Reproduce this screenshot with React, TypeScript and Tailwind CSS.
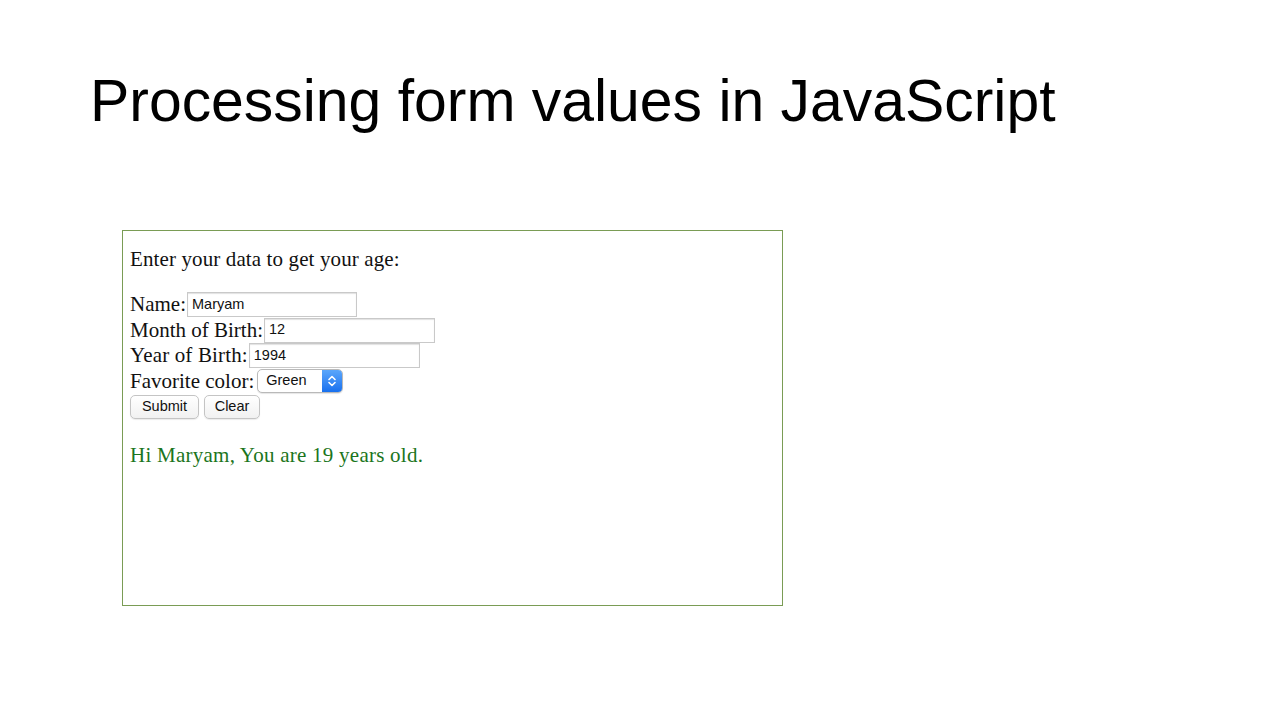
import React from "react";

const serif = { fontFamily: '"Liberation Serif", "Times New Roman", serif' };
const sans = { fontFamily: '"Liberation Sans", Arial, sans-serif' };

function Field({ label, value, width }: { label: string; value: string; width: string }) {
  return (
    <div className="flex items-center h-[25.5px]">
      <span className="leading-none">{label}</span>
      <div
        className={`${width} h-[25px] ml-px border border-[#c9c9c9] shadow-[inset_0_1px_1px_rgba(0,0,0,0.12)] bg-white flex items-center pl-[4px] text-[14.5px] text-[#111]`}
        style={sans}
      >
        {value}
      </div>
    </div>
  );
}

export default function App() {
  return (
    <div className="w-[1280px] h-[720px] bg-white overflow-hidden pl-[90px] pt-[71px]">
      <h1 className="text-[58.9px] leading-[60px] text-black" style={sans}>
        Processing form values in JavaScript
      </h1>
      <div
        className="mt-[99px] ml-[32px] w-[661px] h-[376px] border border-[#7a9c55] pl-[7px] pt-[17px] text-[21px] text-[#111]"
        style={serif}
      >
        <p className="leading-[23px] tracking-[0.12px]">Enter your data to get your age:</p>
        <div className="mt-[21px] flex flex-col">
          <Field label="Name:" value="Maryam" width="w-[170px]" />
          <Field label="Month of Birth:" value="12" width="w-[171px]" />
          <div className="flex items-center h-[25.5px]">
            <span className="leading-none tracking-[0.15px]">Year of Birth:</span>
            <div
              className="w-[171px] h-[25px] ml-px border border-[#c9c9c9] shadow-[inset_0_1px_1px_rgba(0,0,0,0.12)] bg-white flex items-center pl-[4px] text-[14.5px] text-[#111]"
              style={sans}
            >
              1994
            </div>
          </div>
          <div className="flex items-center h-[25.5px]">
            <span className="leading-none">Favorite color:</span>
            <div
              className="ml-[3px] w-[86px] h-[24px] rounded-[5px] border border-[#b9b9b9] bg-white flex items-stretch overflow-hidden shadow-[0_1px_1px_rgba(0,0,0,0.1)]"
              style={sans}
            >
              <span className="flex-1 flex items-center pl-[8px] text-[14.5px] text-[#111]">Green</span>
              <span className="w-[20px] flex items-center justify-center bg-gradient-to-b from-[#5aa6fb] to-[#1770ee]">
                <svg width="10" height="14" viewBox="0 0 10 14" fill="none" stroke="white" strokeWidth="1.6" strokeLinecap="round" strokeLinejoin="round">
                  <path d="M2 5.5 L5 2.5 L8 5.5" />
                  <path d="M2 8.5 L5 11.5 L8 8.5" />
                </svg>
              </span>
            </div>
          </div>
          <div className="flex items-center gap-[5px] h-[25.5px]" style={sans}>
            <button className="w-[69px] h-[24px] rounded-[5px] border border-[#c4c4c4] bg-gradient-to-b from-white to-[#f1f1f1] text-[14.5px] text-[#111] shadow-[0_1px_1px_rgba(0,0,0,0.08)]">
              Submit
            </button>
            <button className="w-[56px] h-[24px] rounded-[5px] border border-[#c4c4c4] bg-gradient-to-b from-white to-[#f1f1f1] text-[14.5px] text-[#111] shadow-[0_1px_1px_rgba(0,0,0,0.08)]">
              Clear
            </button>
          </div>
        </div>
        <p className="mt-[24px] leading-[23px] tracking-[0.25px] text-[#1b7520]">Hi Maryam, You are 19 years old.</p>
      </div>
    </div>
  );
}
